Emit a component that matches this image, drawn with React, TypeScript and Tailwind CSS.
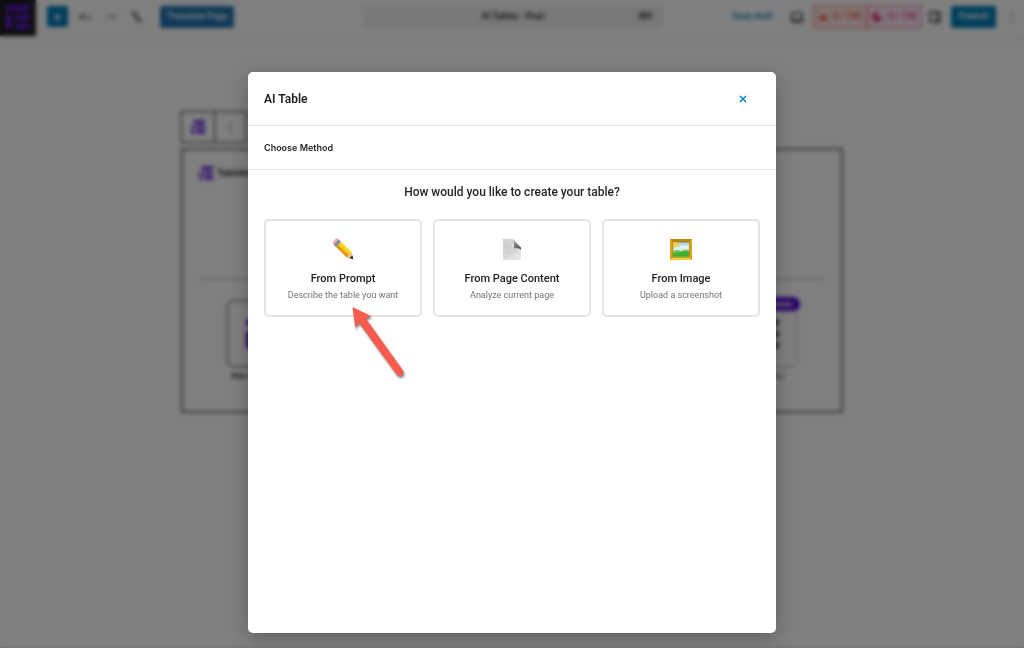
import type { ReactNode } from "react";

function BrandMark({ className }: { className: string }) {
  return (
    <svg viewBox="0 0 26 26" className={className} fill="currentColor" aria-hidden="true">
      <rect x="0" y="0" width="26" height="6" rx="2" />
      <rect x="0" y="10" width="6" height="16" rx="2" />
      <rect x="10" y="10" width="16" height="6" rx="2" />
      <rect x="10" y="20" width="16" height="6" rx="2" />
    </svg>
  );
}

function TableMark({ className }: { className: string }) {
  return (
    <svg viewBox="0 0 14 14" className={className} fill="currentColor" aria-hidden="true">
      <path d="M3 0h11v4H2z M0 6h4v3H0z M5.500 5.500H14v3.200H5.500z M0 10.500h4V14H0z M5.500 10H14v4H5.500z" />
    </svg>
  );
}

function UndoIcon({ className }: { className: string }) {
  return (
    <svg viewBox="0 0 24 24" className={className} fill="currentColor" aria-hidden="true">
      <path d="M18.300 11.700c-.6-.6-1.400-.9-2.300-.9H6.700l2.900-3.300-1.100-1-4.500 5L8.500 16l1-1-2.700-2.700H16c.5 0 .9.200 1.300.5 1 1 1 3.400 1 4.500v.3h1.500v-.2c0-1.500 0-4.300-1.500-5.700z" />
    </svg>
  );
}

function EditorHeader() {
  return (
    <header className="flex h-[38px] shrink-0 items-center justify-between border-b border-[#e0e0e0] pb-1 font-['Roboto','Inter',sans-serif]">
      <div className="flex flex-1 items-center">
        <a href="#home" aria-label="Home" className="flex h-[38px] w-9 items-center justify-center bg-[#1e1e1e] text-[#5b16d0]">
          <BrandMark className="size-6" />
        </a>
        <button aria-label="Add block" className="ml-[11px] flex size-[21px] items-center justify-center rounded-xs bg-[#007cba] text-sm font-medium text-white">
          +
        </button>
        <button aria-label="Undo" className="ml-2 flex w-[18px] justify-center">
          <UndoIcon className="size-4" />
        </button>
        <button aria-label="Redo" className="ml-2 flex w-[18px] justify-center text-[#8a8a8a]">
          <UndoIcon className="size-4 -scale-x-100" />
        </button>
        <button aria-label="Document overview" className="ml-2 flex w-[18px] justify-center text-[#555555]">
          <svg viewBox="0 0 16 16" className="size-4" stroke="currentColor" strokeWidth="1.500" fill="none">
            <path d="M2 4h7M5 8h6M8 12h6M4 4l6 8" />
          </svg>
        </button>
        <button className="ml-[14px] h-[22px] w-[74px] rounded-xs bg-[#2271b1] text-[9px] font-medium text-white">
          Translate Page
        </button>
      </div>
      <button className="flex h-[21px] w-[297px] items-center rounded-xs bg-[#f0f0f0] px-2 text-[9px] font-medium">
        <span className="flex-1 pl-4 text-center">AI Tables · Post</span>
        <span>⌘K</span>
      </button>
      <div className="flex flex-1 items-center justify-end">
        <button className="text-[9px] font-medium text-[#007cba]">Save draft</button>
        <button aria-label="Preview" className="ml-4 flex text-[#444444]">
          <svg viewBox="0 0 16 16" className="size-4" stroke="currentColor" strokeWidth="1.500" fill="none">
            <path d="M3 4h10v7H3zM1.500 12.500h13" />
          </svg>
        </button>
        <span className="ml-2 flex h-6 w-[54px] items-center justify-center gap-1.5 border border-[#ff8a7a] bg-[#ffe6e2] text-[9px] font-medium text-[#f5553d]">
          <svg viewBox="0 0 10 10" className="size-2" fill="currentColor"><path d="M0 9V5l4-1V1l6 4v4z" /></svg>
          0 / 100
        </span>
        <span className="flex h-6 w-[55px] items-center justify-center gap-1.5 border border-[#f778b2] bg-[#ffe6f1] text-[9px] font-medium text-[#e8368a]">
          <svg viewBox="0 0 10 10" className="size-[10px]" fill="currentColor"><path d="M5 0a5 5 0 1 0 5 5H6V0z" /></svg>
          0 / 100
        </span>
        <button aria-label="Settings" className="ml-[5px] flex text-[#333333]">
          <svg viewBox="0 0 16 16" className="size-4" stroke="currentColor" strokeWidth="1.500" fill="none">
            <path d="M3 3h10v10H3zM10 3v10" />
          </svg>
        </button>
        <button className="ml-2 h-[22px] w-[45px] rounded-xs bg-[#007cba] text-[9px] font-medium text-white">Publish</button>
        <button aria-label="Options" className="mr-1 ml-2 w-4 text-xs text-[#444444]">⋮</button>
      </div>
    </header>
  );
}

function EditorCanvas() {
  return (
    <main className="mx-auto mt-[73px] w-[662px] max-w-full">
      <div className="flex h-8 w-[66px] border border-[#1e1e1e]">
        <div className="flex flex-1 items-center justify-center border-r border-[#1e1e1e] text-[#6b2fe0]">
          <TableMark className="size-[14px]" />
        </div>
        <div className="flex flex-1 items-center justify-center text-xs text-[#555555]">⋮</div>
      </div>
      <section className="mt-[5px] h-[265px] border-2 border-[#757575] px-4">
        <div className="flex h-[46px] items-center gap-1 text-[9px] font-bold">
          <TableMark className="size-[14px] text-[#6b2fe0]" />
          Tableberg
        </div>
        <div className="mt-[82px] border-b border-[#b0b0b0]" />
        <div className="mt-[21px] flex justify-between px-7">
          <div className="text-center text-[8px] font-bold">
            <div className="flex size-[67px] items-center justify-center rounded-md border border-[#333333] text-[#5b16d0]">
              <BrandMark className="size-[30px]" />
            </div>
            <p className="mt-[3px]">Pre-Built Table</p>
          </div>
          <div className="relative text-center text-[8px] font-medium text-[#777777]">
            <div className="flex size-[67px] items-center justify-center rounded-md border border-[#b0b0b0] text-[#555555]">
              <BrandMark className="size-[30px]" />
            </div>
            <p className="mt-[3px]">Woo Table</p>
            <span className="absolute -top-[3px] -right-[3px] rounded-full bg-[#5000c8] px-2 py-px font-bold text-white">Features</span>
          </div>
        </div>
      </section>
    </main>
  );
}

function PencilIcon() {
  return (
    <svg viewBox="0 0 24 24" className="size-6" aria-hidden="true">
      <path d="M2.200 4.700 5 1.800q1-.7 2.200.1L9 3.500 4.200 8.800 2.200 6.800q-.8-1.100 0-2.100z" fill="#ef8796" />
      <path d="m2.200 5.500 3.700-3.600 1.200.7-3.800 4.200z" fill="#f8b1b5" />
      <path d="m7.400 2.800 3 2.500-4.900 5.200-2.800-2.800z" fill="#7c9db4" />
      <path d="m8.600 3.700-4.900 5M9.600 4.700l-4.700 5" stroke="#54738a" strokeWidth=".6" />
      <path d="m9.900 4.800 10.900 10.400-4.900 5.200L5.200 10z" fill="#f7bd16" />
      <path d="m9.900 4.800 10.900 10.400-1.600 1.700L8.200 6.600z" fill="#ffdb36" />
      <path d="m6.800 8.400 10.700 10.300-1.600 1.700L5.200 10z" fill="#dd920c" />
      <path d="m20.800 15.200 1.400 7-6.300-1.800z" fill="#e8c18d" />
      <path d="m21.500 18.600.8 3.800-3.900-1.300z" fill="#292a29" />
    </svg>
  );
}

function PageIcon() {
  return (
    <svg viewBox="0 0 24 24" className="size-6" aria-hidden="true">
      <defs>
        <linearGradient id="paper" x2="1" y2="1">
          <stop stopColor="#cecece" />
          <stop offset="1" stopColor="#e9e9e9" />
        </linearGradient>
        <linearGradient id="fold" x2="1" y2="1">
          <stop stopColor="#b0b0b0" />
          <stop offset="1" stopColor="#444444" />
        </linearGradient>
      </defs>
      <path d="M3 2h10l8 9v12H3z" fill="url(#paper)" />
      <path d="M12.500 2c2 2 1.500 5 1.500 9.500 2.700-.4 5.300-.1 7 1.200V10.500z" fill="url(#fold)" />
      <path d="M5 7h7M5 9h7M5 11h8M5 13h12M5 15h13M5 17h9M5 20h4" stroke="#c5c5c5" strokeWidth=".6" />
    </svg>
  );
}

function PictureIcon() {
  return (
    <svg viewBox="0 0 24 24" className="size-6" aria-hidden="true">
      <path d="M1 2h22v21H1z" fill="#dfa412" />
      <path d="M1 2h22l-3.500 3.500h-15z" fill="#c18513" />
      <path d="M1 23h22l-3.500-3.500h-15z" fill="#f7cf35" />
      <path d="M3.500 4.500h17v16h-17z" fill="#9b7525" />
      <path d="M4 5.500h16v14H4z" fill="#a7dcec" />
      <path d="M6 11q1-2 4-1 1-4 4-1 3-2 6 0v5H4z" fill="#e4edf0" />
      <path d="M4 5.500h6q0 4.500-6 4.500z" fill="#f8cf38" />
      <path d="M4 14q5-2 8 0 4-2 8-1v6.500H4z" fill="#69c744" />
      <path d="M4 17q8-3 16-2v4.500H4z" fill="#43ac32" />
    </svg>
  );
}

function CalloutArrow() {
  return (
    <svg viewBox="0 0 60 80" className="pointer-events-none absolute top-[85px] left-[84px] z-10 h-20 w-[60px] drop-shadow-[1px_2px_1px_rgba(0,0,0,0.5)]" aria-hidden="true">
      <path d="M4.500 3 23.500 12.300 17.600 14.200 55 66.600Q56.400 69.500 54 71.300 51 73 48.600 70.600L11 18.800 7.200 23.500Z" fill="#fa5b4c" />
    </svg>
  );
}

function MethodCard({ icon, title, text, children }: { icon: ReactNode; title: string; text: string; children?: ReactNode }) {
  return (
    <div className="relative min-w-0 flex-1">
      <button className="flex h-[98px] w-full flex-col items-center rounded-[5px] border-2 border-[#e5e5e5] bg-white pt-4">
        {icon}
        <span className="mt-[10px] text-[11px] leading-4 font-medium text-[#1e1e1e]">{title}</span>
        <span className="mt-px text-[9px] leading-3.5 text-[#757575]">{text}</span>
      </button>
      {children}
    </div>
  );
}

export default function App() {
  return (
    <div className="h-screen overflow-hidden bg-white font-['Inter','Liberation_Sans',sans-serif] text-[#1e1e1e]">
      <div className="flex h-full flex-col border-b border-[#e0e0e0]">
        <EditorHeader />
        <EditorCanvas />
      </div>
      <div className="fixed inset-0 flex justify-center bg-black/50 pt-[72px] pb-[15px] backdrop-blur-[2px]">
        <div role="dialog" aria-modal="true" aria-labelledby="dialog-title" className="flex w-[528px] max-w-full flex-col rounded-[5px] bg-white font-['Roboto','Inter',sans-serif] shadow-[0_5px_20px_rgba(0,0,0,0.25)]">
          <div className="flex h-[54px] shrink-0 items-center justify-between border-b border-[#e4e4e4] px-4">
            <h1 id="dialog-title" className="text-xs font-semibold">AI Table</h1>
            <button aria-label="Close" className="mr-3 flex size-[10px] items-center justify-center text-[#0085c3]">
              <svg viewBox="0 0 8 8" className="size-2" stroke="currentColor" strokeWidth="1.500" fill="none">
                <path d="m1 1 6 6M7 1 1 7" />
              </svg>
            </button>
          </div>
          <div className="flex h-11 shrink-0 items-center border-b border-[#e4e4e4] px-4">
            <p className="font-['Inter','Liberation_Sans',sans-serif] text-[9px] font-semibold">Choose Method</p>
          </div>
          <div className="px-4 pt-[14px]">
            <h2 className="text-center text-xs leading-4 font-medium text-[#1d2327]">How would you like to create your table?</h2>
            <div className="mt-[19px] flex gap-[11px]">
              <MethodCard icon={<PencilIcon />} title="From Prompt" text="Describe the table you want">
                <CalloutArrow />
              </MethodCard>
              <MethodCard icon={<PageIcon />} title="From Page Content" text="Analyze current page" />
              <MethodCard icon={<PictureIcon />} title="From Image" text="Upload a screenshot" />
            </div>
          </div>
        </div>
      </div>
    </div>
  );
}
